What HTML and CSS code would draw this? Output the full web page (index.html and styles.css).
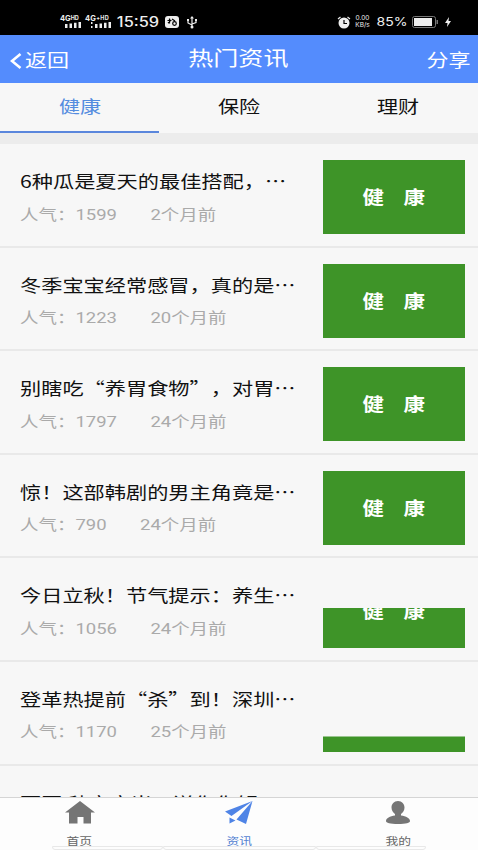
FILE: index.html
```html
<!DOCTYPE html>
<html lang="zh-CN">
<head>
<meta charset="utf-8">
<title>热门资讯</title>
<link rel="stylesheet" href="styles.css">
</head>
<body>
<div class="status">
  <div class="sim"><b>4G<sup>HD</sup></b><svg width="16" height="6" viewBox="0 0 16 6"><path d="M0 2h2.500v4H0zM4.500 1.500H7V6H4.500zM9 .7h2.500V6H9zM13.500 0H16v6h-2.500z"/></svg></div>
  <div class="sim sim2"><b>4G<sup>+HD</sup></b><svg width="20" height="6" viewBox="0 0 20 6"><path d="M0 0h1.500v2H0zM0 4h1.500v2H0zM4 2h2.500v4H4zM8.500 1.500H11V6H8.500zM13 .7h2.500V6H13zM17.500 0H20v6h-2.500z"/></svg></div>
  <span class="clock">15:59</span>
  <svg class="app" width="14" height="12" viewBox="0 0 14 12"><rect width="14" height="12" rx="3"/><path class="dark" d="M2.500 4.500h4M4.500 2.500v5M3 7l3-3"/><circle class="dark" cx="9.500" cy="7.500" r="1.800"/><path class="dark" d="M7 3l3 2"/></svg>
  <svg class="usb" width="12" height="13" viewBox="0 0 12 13"><path class="line" d="M6 1v10M2 4v3l4 2M10 4v2.500L6 8"/><path d="M6 0l2 2.500H4zM1 3h2v2H1zM9 3h2v2H9z"/><circle cx="6" cy="11" r="1.500"/></svg>
  <div class="right">
    <svg width="14" height="13" viewBox="0 0 14 13"><circle cx="7" cy="7" r="5.500"/><path class="line" d="M1 3l2.500-2M13 3l-2.500-2"/><path class="dark" d="M7 4v3.500h3"/></svg>
    <div class="rate">0.00<br>KB/s</div>
    <span class="percent">85%</span>
    <svg class="battery" width="26" height="12" viewBox="0 0 26 12"><rect class="case" x=".5" y=".5" width="23" height="11" rx="2"/><rect x="2" y="2" width="18" height="8"/><path class="tip" d="M24.500 4h1.500v4h-1.500z"/></svg>
    <svg class="bolt" width="6" height="10" viewBox="0 0 6 10"><path d="M4 0L0 6h2.500L2 10l4-6H3.500z"/></svg>
  </div>
</div>

<header class="bar">
  <a class="back"><svg width="12" height="18" viewBox="0 0 12 18"><path d="M10.500 2L2 9l8.500 7"/></svg><span class="wide">返回</span></a>
  <h1><span class="wide">热门资讯</span></h1>
  <a class="share"><span class="wide">分享</span></a>
</header>

<nav class="tabs">
  <a class="on"><span class="wide">健康</span></a>
  <a><span class="wide">保险</span></a>
  <a><span class="wide">理财</span></a>
</nav>

<main class="list">
  <article><div class="info"><h2 class="wide">6种瓜是夏天的最佳搭配，⋯</h2><p class="wide"><span>人气：1599</span><span>2个月前</span></p></div><div class="pic"><b>健</b><b>康</b></div></article>
  <article><div class="info"><h2 class="wide">冬季宝宝经常感冒，真的是⋯</h2><p class="wide"><span>人气：1223</span><span>20个月前</span></p></div><div class="pic"><b>健</b><b>康</b></div></article>
  <article><div class="info"><h2 class="wide">别瞎吃“养胃食物”，对胃⋯</h2><p class="wide"><span>人气：1797</span><span>24个月前</span></p></div><div class="pic"><b>健</b><b>康</b></div></article>
  <article><div class="info"><h2 class="wide">惊！这部韩剧的男主角竟是⋯</h2><p class="wide"><span>人气：790</span><span>24个月前</span></p></div><div class="pic"><b>健</b><b>康</b></div></article>
  <article><div class="info"><h2 class="wide">今日立秋！节气提示：养生⋯</h2><p class="wide"><span>人气：1056</span><span>24个月前</span></p></div><div class="pic half"><b>健</b><b>康</b></div></article>
  <article><div class="info"><h2 class="wide">登革热提前“杀”到！深圳⋯</h2><p class="wide"><span>人气：1170</span><span>25个月前</span></p></div><div class="pic sliver"></div></article>
  <article><div class="info"><h2 class="wide">百豆 秋方方当，送你你解⋯</h2></div></article>
</main>

<footer class="dock">
  <a><svg width="32" height="24" viewBox="0 0 32 24"><path d="M16 0L31 11.500h-4V22.500h-7.500V16h-6v6.500H5V11.500H1z"/></svg><span class="wide">首页</span></a>
  <a class="on"><svg width="28" height="24" viewBox="0 0 28 24"><path d="M27.500 0L0 10.500 6.500 15zM27.500 0L11.500 18.500 21 23zM4.500 16.500l6 3-6 3z"/></svg><span class="wide">资讯</span></a>
  <a><svg width="26" height="24" viewBox="0 0 26 24"><path d="M13 0c4 0 6.500 3 6.500 6.500 0 3-1.500 5-3.500 6.500v1.500c5 .8 9 2.500 9 5.500 0 2-4 3-12 3S1 22 1 20c0-3 4-4.700 9-5.500V13C8 11.500 6.500 9.500 6.500 6.500 6.500 3 9 0 13 0z"/></svg><span class="wide">我的</span></a>
  <div class="edge"><i></i><i></i><i></i></div>
</footer>
</body>
</html>
```
FILE: styles.css
```css
* { box-sizing: border-box; margin: 0; padding: 0; }
body {
  width: 478px; height: 850px; overflow: hidden;
  display: flex; flex-direction: column;
  background: #f7f7f7; color: #111;
  font-family: Roboto, "Noto Sans CJK SC", sans-serif;
}
svg { display: block; flex: none; }
.wide { display: inline-block; white-space: nowrap; transform: scaleX(1.24); }

.status {
  flex: none; height: 35px; padding: 9px 27px 0 60px;
  display: flex; align-items: center; background: #000; color: #eee;
  font-family: Inter, sans-serif;
}
.status svg { fill: #eee; }
.status .line { fill: none; stroke: #eee; stroke-width: 1.2; }
.status .dark { fill: none; stroke: #000; stroke-width: 1.2; }
.sim { width: 25px; height: 14px; display: flex; flex-direction: column; align-items: center; }
.sim b { font-size: 7.500px; line-height: 7px; height: 7px; white-space: nowrap; align-self: flex-start; }
.sim sup { font-size: 5.500px; line-height: 1; vertical-align: 1.500px; }
.sim2 { width: 32px; }
.sim2 b { letter-spacing: .3px; }
.clock, .percent { display: inline-block; white-space: nowrap; transform: scaleX(1.17); }
.clock { width: 42px; font-size: 14px; line-height: 14px; text-align: center; font-weight: 500; }
.app { margin-left: 6px; }
.usb { margin-left: 7px; }
.right { margin-left: auto; display: flex; align-items: center; }
.rate { width: 17px; margin-left: 3px; font-size: 6.500px; line-height: 7px; text-align: center; }
.percent { width: 30px; margin: 0 5px 0 6px; font-size: 12px; line-height: 14px; text-align: center; }
.battery .case { fill: none; stroke: #777; }
.battery .tip { fill: #777; }
.bolt { margin-left: 7px; }

.bar {
  flex: none; height: 48px; padding: 0 7px 0 10px;
  display: grid; grid-template-columns: 1fr auto 1fr; align-items: center;
  background: #548cfd; color: #fff;
}
.bar a { font-size: 17.800px; line-height: 24px; padding-top: 3px; }
.bar h1 { margin-right: 4px; font-size: 20.200px; line-height: 28px; font-weight: 400; }
.back { display: flex; align-items: center; gap: 3px; }
.back .wide { transform-origin: left; }
.back svg { fill: none; stroke: #fff; stroke-width: 2.600; }
.share { text-align: right; }
.share .wide { transform-origin: right; }

.tabs {
  flex: none; height: 61px; border-bottom: 11px solid #ececec;
  display: grid; grid-template-columns: repeat(3, 1fr);
}
.tabs a { text-align: center; font-size: 17px; line-height: 48px; }
.tabs .on { color: #548cdf; border-bottom: 2px solid #5a86dc; }

.list { flex: 1; min-height: 0; overflow: hidden; }
article {
  height: 103.600px; padding: 16px 13px 0 20px;
  display: flex; justify-content: space-between;
  border-bottom: 2px solid #e9e9e9;
}
.info { width: 290px; display: flex; flex-direction: column; align-items: flex-start; padding-top: 8px; }
.info .wide { transform-origin: left; }
h2 {
  font-family: "Noto Sans CJK SC", sans-serif; font-size: 17.100px; line-height: 26px; font-weight: 400;
  text-spacing-trim: space-all;
}
p { margin-top: 9.500px; font-size: 14.900px; line-height: 22px; color: #aaa; }
p span + span { margin-left: 27px; }
.pic {
  flex: none; width: 142px; height: 74px; padding-bottom: 2px; background: #3e9428; color: #fff;
  display: flex; justify-content: center; align-items: center; gap: 22px;
}
.pic b { font-size: 18.500px; transform: scaleX(1.16); }
.half { clip-path: inset(33.500px 0 0); }
.sliver { clip-path: inset(58.500px 0 0); }

.dock {
  flex: none; height: 53px; position: relative; padding-top: 3px;
  display: grid; grid-template-columns: repeat(3, 1fr);
  background: #fdfdfd; border-top: 1px solid #d5d5d5;
}
.dock a {
  display: flex; flex-direction: column; align-items: center; gap: 8px;
  font-size: 10.300px; line-height: 17px; color: #666;
}
.dock svg { fill: #757575; }
.dock .on { color: #5583d2; }
.dock .on svg { fill: #4f84e6; }
.edge {
  position: absolute; left: 52px; bottom: 0; width: 374px;
  display: grid; grid-template-columns: 111px 153px 110px;
}
.edge i { height: 4px; border: 1px solid #e8e8e8; border-radius: 0 0 3px 3px; }
```
